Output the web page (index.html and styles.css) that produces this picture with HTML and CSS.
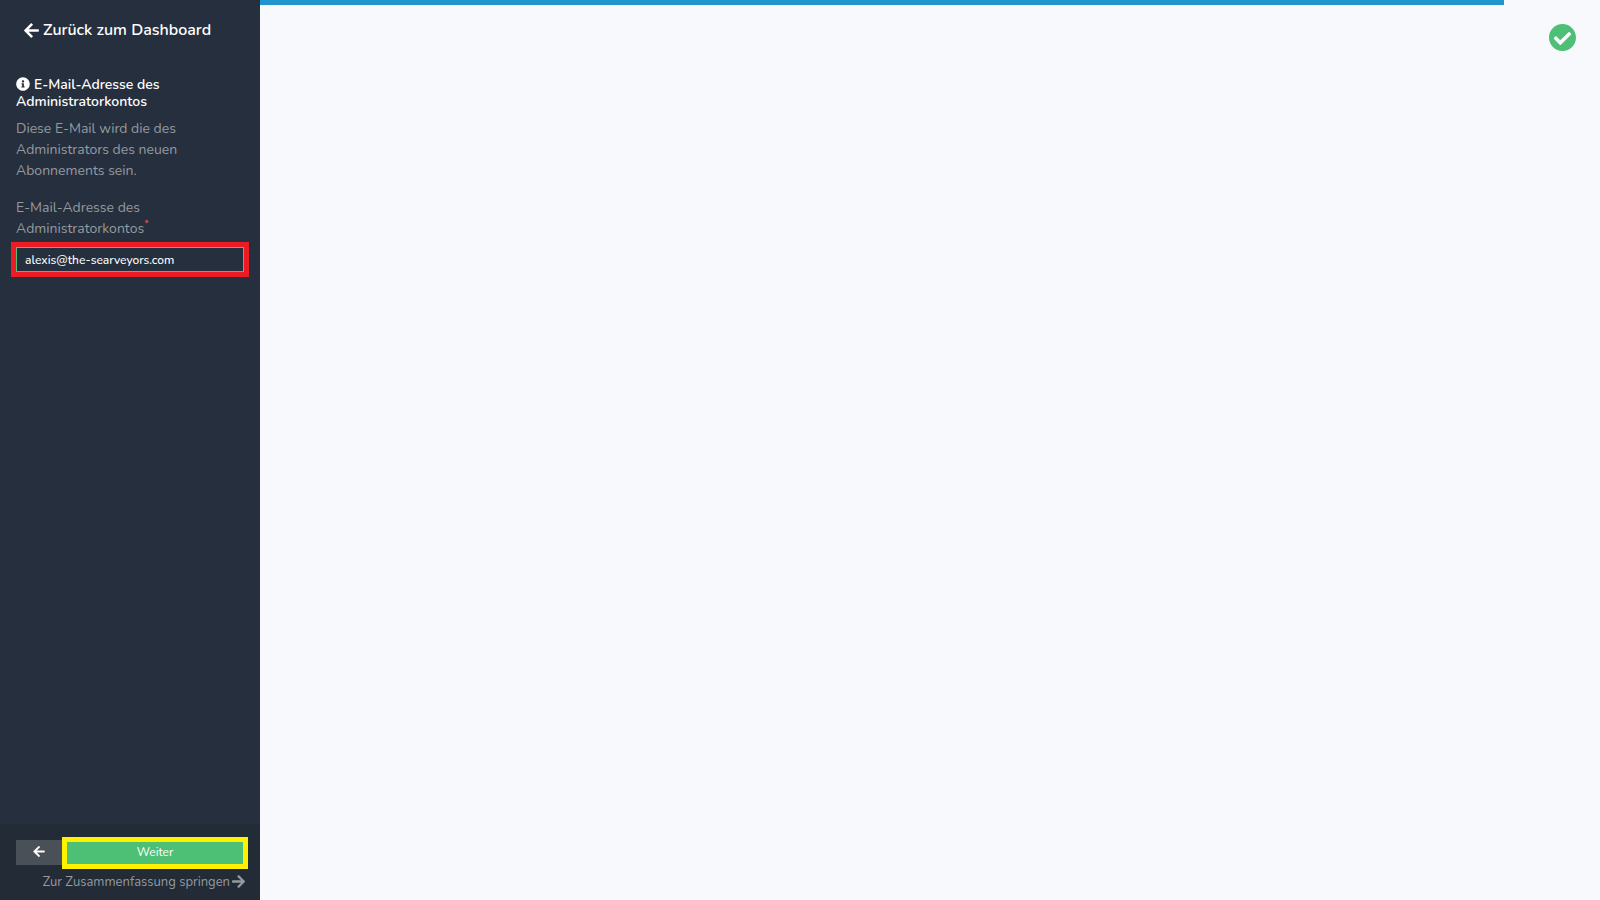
FILE: index.html
```html
<!DOCTYPE html>
<html lang="de">
<head>
<meta charset="utf-8">
<meta name="viewport" content="width=device-width, initial-scale=1">
<title>E-Mail-Adresse des Administratorkontos</title>
<link rel="stylesheet" href="styles.css">
</head>
<body>
<form class="app">
  <aside class="sidebar">
    <a class="back-link" href="#"><svg class="icon-arrow" viewBox="0 0 448 512" aria-hidden="true"><path d="M257.500 445.100l-22.200 22.200c-9.400 9.400-24.600 9.400-33.900 0L7 273c-9.400-9.400-9.400-24.600 0-33.900L201.400 44.700c9.400-9.400 24.600-9.400 33.900 0l22.200 22.200c9.500 9.500 9.300 25-.4 34.300L136.600 216H424c13.300 0 24 10.700 24 24v32c0 13.300-10.700 24-24 24H136.600l120.500 114.800c9.800 9.300 10 24.800.4 34.300z"/></svg><span>Zurück zum Dashboard</span></a>
    <div class="step">
      <h1 class="step-title"><svg class="icon-info" viewBox="0 0 512 512" aria-hidden="true"><path d="M256 8C119.043 8 8 119.083 8 256c0 136.997 111.043 248 248 248s248-111.003 248-248C504 119.083 392.957 8 256 8zm0 110c23.196 0 42 18.804 42 42s-18.804 42-42 42-42-18.804-42-42 18.804-42 42-42zm56 254c0 6.627-5.373 12-12 12h-88c-6.627 0-12-5.373-12-12v-24c0-6.627 5.373-12 12-12h12v-64h-12c-6.627 0-12-5.373-12-12v-24c0-6.627 5.373-12 12-12h64c6.627 0 12 5.373 12 12v100h12c6.627 0 12 5.373 12 12v24z"/></svg>E-Mail-Adresse des Administratorkontos</h1>
      <p class="step-text">Diese E-Mail wird die des Administrators des neuen Abonnements sein.</p>
      <label class="field-label" for="email">E-Mail-Adresse des Administratorkontos<sup class="required">*</sup></label>
      <input class="field" id="email" type="email" value="alexis@the-searveyors.com" required>
    </div>
    <footer class="actions">
      <div class="buttons">
        <button class="btn-prev" type="button" aria-label="Zurück"><svg class="icon-prev" viewBox="0 0 448 512" aria-hidden="true"><path d="M257.500 445.100l-22.200 22.200c-9.400 9.400-24.600 9.400-33.900 0L7 273c-9.400-9.400-9.400-24.600 0-33.900L201.400 44.700c9.400-9.400 24.600-9.400 33.900 0l22.200 22.200c9.500 9.500 9.300 25-.4 34.300L136.600 216H424c13.300 0 24 10.700 24 24v32c0 13.300-10.700 24-24 24H136.600l120.500 114.800c9.800 9.300 10 24.800.4 34.300z"/></svg></button>
        <button class="btn-next" type="button">Weiter</button>
      </div>
      <a class="skip-link" href="#"><span>Zur Zusammenfassung springen</span><svg class="icon-skip" viewBox="0 0 448 512" aria-hidden="true"><path d="M190.500 66.900l22.200-22.200c9.400-9.400 24.600-9.400 33.900 0L441 239c9.400 9.400 9.400 24.600 0 33.900L246.600 467.300c-9.400 9.400-24.600 9.400-33.900 0l-22.200-22.200c-9.500-9.500-9.300-25 .4-34.300L311.400 296H24c-13.300 0-24-10.700-24-24v-32c0-13.300 10.700-24 24-24h287.400L190.900 101.200c-9.800-9.300-10-24.800-.4-34.300z"/></svg></a>
    </footer>
  </aside>
  <main class="content">
    <div class="progress"><div class="progress-bar" style="width: 92.85%"></div></div>
    <svg class="status" viewBox="8 8 496 496" role="img" aria-label="Gespeichert"><path d="M504 256c0 136.967-111.033 248-248 248S8 392.967 8 256 119.033 8 256 8s248 111.033 248 248zM227.314 387.314l184-184c6.248-6.248 6.248-16.379 0-22.627l-22.627-22.627c-6.248-6.249-16.379-6.249-22.628 0L216 308.118l-70.059-70.059c-6.248-6.248-16.379-6.248-22.628 0l-22.627 22.627c-6.248 6.248-6.248 16.379 0 22.627l104 104c6.249 6.249 16.379 6.249 22.628.001z"/></svg>
  </main>
</form>
</body>
</html>
```

FILE: styles.css
```css
* {
  box-sizing: border-box;
}

body {
  margin: 0;
  font-family: Nunito, "Open Sans", "Noto Sans", sans-serif;
  font-size: 14px;
  line-height: 21px;
  color: #959a9f;
  background: #f8f9fd;
}

svg {
  fill: currentColor;
  flex: none;
}

a {
  color: inherit;
  text-decoration: none;
}

button,
input {
  font: inherit;
}

.app {
  display: flex;
  min-height: 100vh;
}

.sidebar {
  display: flex;
  flex-direction: column;
  flex: none;
  width: 260px;
  background: #252f3e;
}

.back-link {
  display: flex;
  align-items: center;
  gap: 4px;
  padding: 18px 24px;
  font-size: 16px;
  font-weight: 600;
  line-height: 24px;
  color: #fff;
}

.icon-arrow {
  width: 15px;
  height: 17px;
}

.step {
  flex: 1;
  padding: 16px;
}

.step-title {
  margin: 0 0 8px;
  font-size: 14px;
  font-weight: 600;
  line-height: 17px;
  color: #fff;
}

.icon-info {
  width: 14px;
  height: 14px;
  margin-right: 4px;
  vertical-align: -2px;
}

.step-text {
  margin: 0 0 16px;
}

.field-label {
  display: block;
  margin-bottom: 8px;
}

.required {
  font-size: 10px;
  font-weight: 600;
  line-height: 0;
  color: #f0483e;
}

.field {
  display: block;
  width: 100%;
  height: 25px;
  padding: 0 8px;
  border: 1px solid #4dc076;
  border-radius: 0;
  outline: 5px solid #ed1c24;
  font-size: 12px;
  font-weight: 500;
  color: #fff;
  background: #252f3e;
}

.actions {
  padding: 13px 12px 7px 16px;
  background: #222b36;
}

.buttons {
  display: flex;
  align-items: center;
  margin-bottom: 3px;
}

.btn-prev {
  display: flex;
  align-items: center;
  justify-content: center;
  width: 46px;
  height: 25px;
  margin-bottom: 2px;
  padding: 0 1px 1px 0;
  border: 0;
  color: #fff;
  background: #495057;
}

.icon-prev {
  width: 12px;
  height: 13px;
}

.btn-next {
  flex: 1;
  height: 32px;
  padding: 0 0 2px;
  border: 5px solid #fff200;
  font-size: 12px;
  line-height: 18px;
  color: #fff;
  background: #4dc076;
}

.skip-link {
  display: flex;
  align-items: center;
  justify-content: flex-end;
  gap: 2px;
  padding-right: 3px;
  font-size: 13px;
}

.icon-skip {
  width: 13px;
  height: 15px;
  margin-bottom: 2px;
}

.content {
  display: flex;
  flex-direction: column;
  flex: 1;
}

.progress {
  height: 5px;
}

.progress-bar {
  height: 100%;
  background: #2196cc;
}

.status {
  align-self: flex-end;
  width: 27px;
  height: 27px;
  margin: 19px 24px;
  color: #4dc076;
}
```
